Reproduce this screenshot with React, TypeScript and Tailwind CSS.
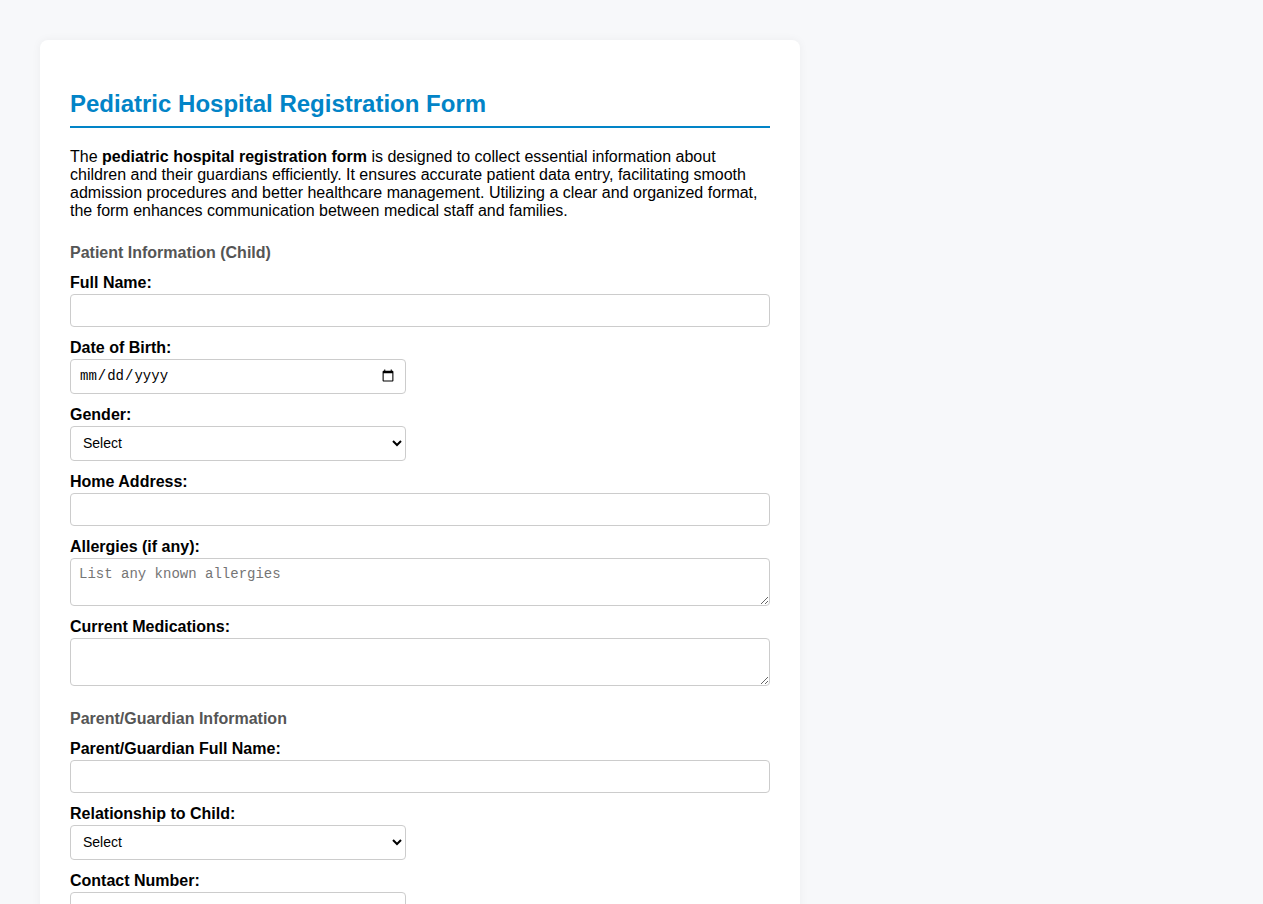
import React from 'react';

const inputBase =
  'block border border-[#cccccc] rounded-[4px] bg-white px-2 text-[14px] text-black outline-none';

const Field: React.FC<{ label: string; children: React.ReactNode }> = ({ label, children }) => (
  <div className="mb-[11px]">
    <label className="block font-bold text-[16px] leading-[18px] pt-[1px] mb-[2px] text-black">{label}</label>
    {children}
  </div>
);

const SectionTitle: React.FC<{ children: React.ReactNode }> = ({ children }) => (
  <h3 className="mt-[24px] mb-[11px] text-[16px] leading-[18px] font-bold text-[#555555]">{children}</h3>
);

const App: React.FC = () => {
  return (
    <div
      className="min-h-screen bg-[#f7f8fa] p-[40px]"
      style={{ fontFamily: '"Liberation Sans", Arial, sans-serif' }}
    >
      <div className="w-[760px] bg-white rounded-lg shadow-[0_0_10px_rgba(0,0,0,0.05)] p-[30px]">
        <h1 className="mt-5 mb-5 pb-2 border-b-2 border-[#0284c7] text-[24px] leading-[27.6px] font-bold text-[#0284c7]">
          Pediatric Hospital Registration Form
        </h1>

        <p className="text-[16px] leading-[18px] text-black mb-[11px]">
          The <strong>pediatric hospital registration form</strong> is designed to collect essential information about
          children and their guardians efficiently. It ensures accurate patient data entry, facilitating smooth
          admission procedures and better healthcare management. Utilizing a clear and organized format, the form
          enhances communication between medical staff and families.
        </p>

        {/* Patient section */}
        <SectionTitle>Patient Information (Child)</SectionTitle>
        <Field label="Full Name:">
          <input type="text" className={`${inputBase} w-full h-[33px]`} />
        </Field>
        <Field label="Date of Birth:">
          <input
            type="date"
            className={`${inputBase} w-[336px] h-[35px] text-[13px]`}
            style={{ fontFamily: '"Liberation Mono", monospace' }}
          />
        </Field>
        <Field label="Gender:">
          <select className={`${inputBase} w-[336px] h-[35px]`}>
            <option>Select</option>
            <option>Male</option>
            <option>Female</option>
            <option>Other</option>
          </select>
        </Field>
        <Field label="Home Address:">
          <input type="text" className={`${inputBase} w-full h-[33px]`} />
        </Field>
        <Field label="Allergies (if any):">
          <textarea
            placeholder="List any known allergies"
            className={`${inputBase} w-full h-[48px] py-2 text-[13px] leading-[15px] placeholder:text-[#757575]`}
            style={{ fontFamily: '"Liberation Mono", monospace' }}
          />
        </Field>
        <Field label="Current Medications:">
          <textarea
            className={`${inputBase} w-full h-[48px] py-2 text-[13px] leading-[15px]`}
            style={{ fontFamily: '"Liberation Mono", monospace' }}
          />
        </Field>

        {/* Guardian section */}
        <SectionTitle>Parent/Guardian Information</SectionTitle>
        <Field label="Parent/Guardian Full Name:">
          <input type="text" className={`${inputBase} w-full h-[33px]`} />
        </Field>
        <Field label="Relationship to Child:">
          <select className={`${inputBase} w-[336px] h-[35px]`}>
            <option>Select</option>
            <option>Mother</option>
            <option>Father</option>
            <option>Guardian</option>
          </select>
        </Field>
        <Field label="Contact Number:">
          <input type="tel" className={`${inputBase} w-[336px] h-[33px]`} />
        </Field>
        <Field label="Email Address:">
          <input type="email" className={`${inputBase} w-full h-[33px]`} />
        </Field>
      </div>
    </div>
  );
};

export default App;
